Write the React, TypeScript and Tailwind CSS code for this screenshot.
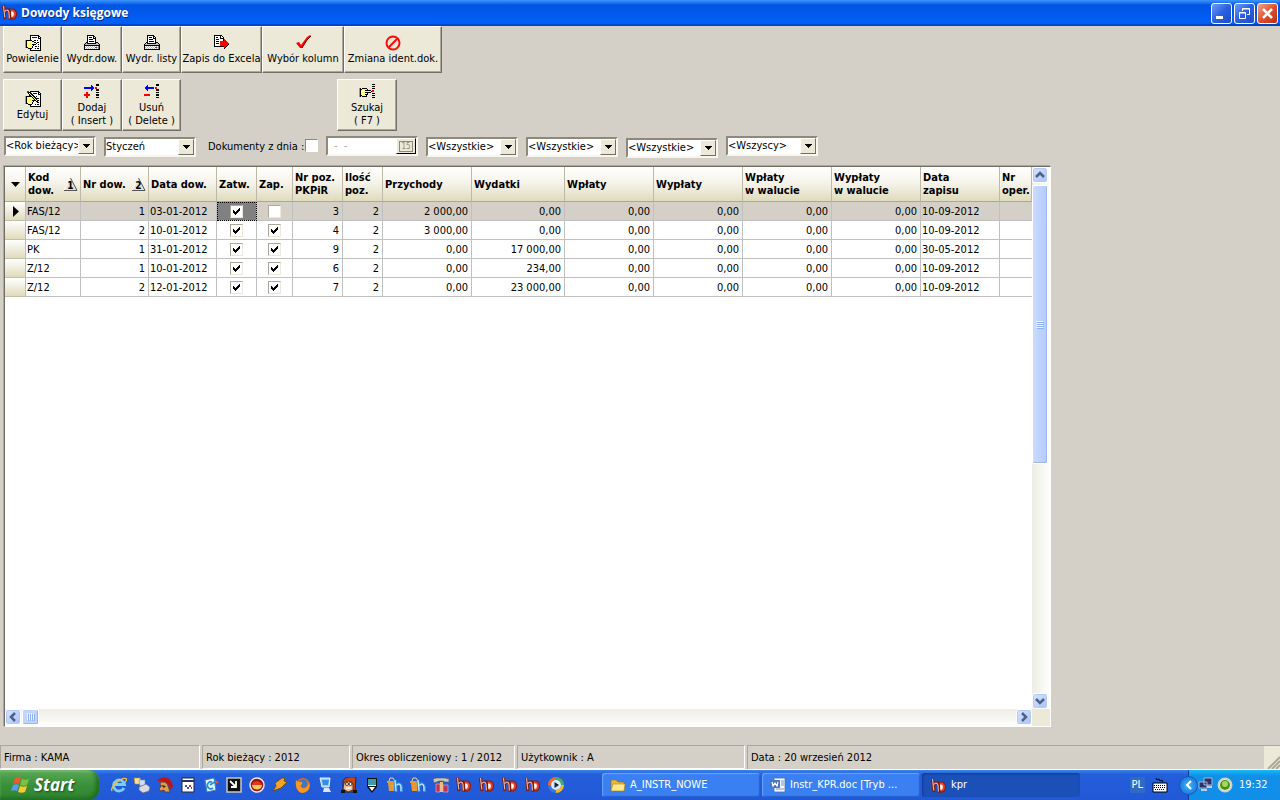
import type { ReactNode } from 'react';
import { clsx } from 'clsx';

const PALETTE: Record<string, string> = {
  K: '#000000',
  W: '#ffffff',
  Y: '#ffff7a',
  C: '#00d8e8',
  R: '#ff0000',
  B: '#0000ff',
  G: '#808080',
  L: '#c0c0c0',
};

const HAND_DOC = [
  '.....KKKKKKKKK..',
  '.....KWWWWWWWKK.',
  '.....KWBBBBBWKWK',
  '.....KWWWWWWWKKK',
  '.....KWWWWWWWWWK',
  'CKKKKKKWWKKWKWWK',
  'CKYYYYYKKWWWWWWK',
  'CKYYYYYYYKKWKKWK',
  'CKYYYYYYYYYKWWWK',
  'CKYYYYYKKKKWWKWK',
  'CKYYYYYYKWWWWWWK',
  'CKYYYYYKWWKKWKWK',
  'CKKYYYYKWWWWWWWK',
  '...KKKKWWWKWKKWK',
  '.....KWWWWWWWWWK',
  '.....KKKKKKKKKKK',
];

const HAND_EDIT = [
  '..RR.KKKKKKKKK..',
  '..RKKKWWWWWWWKK.',
  '...KYKKWBBBBWKWK',
  '....KYKKWWWWWKKK',
  '....KKYKKWWWWWWK',
  'CKKKKKKYKKWKWWWK',
  'CKYYYYYKYKKWWWWK',
  'CKYYYYYYKYKKKKWK',
  'CKYYYYYYYKYKWWWK',
  'CKYYYYYKKKKYKKWK',
  'CKYYYYYYKWWKKWWK',
  'CKYYYYYKWWWWKKWK',
  'CKKYYYYKWWWWWWWK',
  '...KKKKWWWKWKKWK',
  '.....KWWWWWWWWWK',
  '.....KKKKKKKKKKK',
];

const PRINTER = [
  '...KKKKKKK......',
  '...KWWWWWKK.....',
  '...KWKKKWKWK....',
  '...KWWWWWKKK....',
  '...KWKKKKWWK....',
  '...KWWWWWWWK....',
  '...KWKKKKKWK....',
  '..KKWWWWWWWKKK..',
  '.KLKKKKKKKKKLLK.',
  'KLLLLLLLLLLLLLLK',
  'KKKKKKKKKKKKKKKK',
  'KWLWLWLWLWLWLWGK',
  'KLWLWLWLWLWRRLGK',
  'KWLWLWLWLWLWLWGK',
  'KKKKKKKKKKKKKKKK',
];

const EXPORT = [
  'KKKKKKKK........',
  'KWWWWWKWK.......',
  'KWKKWWKWWK......',
  'KWWWWWKKKK......',
  'KWKKKWWWWKR.....',
  'KWWWWWWWWKRR....',
  'KWKKKWRRRRRRR...',
  'KWWWWWRRRRRRRR..',
  'KWKKKWRRRRRRRRR.',
  'KWWWWWRRRRRRRRK.',
  'KWWWWWRRRRRRRK..',
  'KKKKKKKKKKRRK...',
  '..........RK....',
  '..........K.....',
];

const INSERT = [
  '............KKK.',
  '.......B....KKK.',
  '.......BB.......',
  'BBBBBBBBBB.RR...',
  'BBBBBBBBBB.RR...',
  '.......BB...KKK.',
  '.......B....KKK.',
  '................',
  '..RR........KKK.',
  '..RR............',
  'RRRRRR......KKK.',
  'RRRRRR......KKK.',
  '..RR............',
  '..RR........KKK.',
];

const DELETE = [
  '............KKK.',
  '...B........KKK.',
  '..BB............',
  '.BBBBBBBBB.RR...',
  '.BBBBBBBBB.RR...',
  '..BB........KKK.',
  '...B........KKK.',
  '................',
  '............KKK.',
  '................',
  'RRRRRR......KKK.',
  'RRRRRR......KKK.',
  '................',
  '............KKK.',
];

const SEARCH = [
  '.............KKK',
  '................',
  '.............KKK',
  '................',
  'CK.KKKKK.....KKK',
  'CKKYYYYYK.......',
  'CKYYYYKKKKKK.RR.',
  'CKYYYYYYYYYYKRR.',
  'CKYYYYKKKKKK....',
  'CKYYYYYYK....KKK',
  'CKYYYYKKK.......',
  'CKKYYYYK.....KKK',
  'CK.KKKKK........',
  '.............KKK',
];

function PixelIcon({ rows }: { rows: string[] }) {
  return (
    <svg className="block size-4" viewBox="0 0 16 16" shapeRendering="crispEdges" aria-hidden="true">
      {rows.flatMap((row, y) =>
        [...row].map((c, x) => (c === '.' ? null : <rect key={`${x}-${y}`} x={x} y={y} width="1" height="1" fill={PALETTE[c]} />)),
      )}
    </svg>
  );
}

const CheckIcon = () => (
  <svg className="block size-4" viewBox="0 0 16 16" aria-hidden="true">
    <path d="M1 8 L4 7 L6 10 L12 2 L15 0 L16 1 L12 5 L7 13 L5 13 Z" fill="#f00" />
    <path d="M7 13 L12 5 L16 1" stroke="#700" fill="none" />
  </svg>
);

const BanIcon = () => (
  <svg className="block size-4" viewBox="0 0 16 16" fill="none" stroke="#ff0808" strokeWidth="2" aria-hidden="true">
    <circle cx="8" cy="8" r="6.5" />
    <path d="M3.500 12.500 L12.500 3.500" />
  </svg>
);

function AppLogo() {
  return (
    <svg className="block size-4 shrink-0" viewBox="0 0 16 16" fill="none" aria-hidden="true">
      <path d="M7 3.500h3.500c6 0 6 11 0 11H8z" fill="#8c1a10" />
      <path d="M8.500 4.500h2c4.500 0 4.500 9 0 9H9z" fill="#e2452c" />
      <path d="M8.500 6.500h1.500c2.500 0 2.500 5 0 5.500H9z" fill="#fff3ee" />
      <path d="M1.500 1l1.500 13M3 7c1-3 4-3 4.500 0l.5 7.500" stroke="#7a1a10" strokeWidth="3" />
      <path d="M1.500 1l1.300 11.500M3 6.500c1-2 3.500-2 4 1l.4 6" stroke="#e8b0a2" strokeWidth="1.200" />
    </svg>
  );
}

function ToolButton({ icon, label, className }: { icon: ReactNode; label: string; className: string }) {
  return (
    <button
      type="button"
      className={clsx(
        'flex flex-col items-center justify-center gap-px whitespace-pre border border-t-white border-l-white border-r-[#716f64] border-b-[#716f64] bg-[#ece9d8] pt-px text-center leading-[13px] shadow-[inset_-1px_-1px_#aca899]',
        className,
      )}
    >
      {icon}
      {label}
    </button>
  );
}

function Combo({ name, value, className }: { name: string; value: string; className?: string }) {
  return (
    <div className={clsx('flex h-5 w-[92px] border-2 border-t-[#8d8a7c] border-l-[#8d8a7c] border-r-[#f8f6ee] border-b-[#f8f6ee] bg-white', className)}>
      <select aria-label={name} className="min-w-0 flex-1 appearance-none bg-white outline-none">
        <option>{value}</option>
      </select>
      <span className="pointer-events-none flex w-4 items-center justify-center border border-t-white border-l-white border-r-[#716f64] border-b-[#716f64] bg-[#ece9d8]">
        <svg className="h-1 w-[7px]" viewBox="0 0 7 4" shapeRendering="crispEdges"><path d="M0 0h7L3.500 4z" /></svg>
      </span>
    </div>
  );
}

function Tick({ label, checked }: { label: string; checked?: boolean }) {
  return (
    <span className="inline-grid size-[13px] align-middle">
      <input
        type="checkbox"
        aria-label={label}
        defaultChecked={checked}
        className="peer col-start-1 row-start-1 size-[13px] appearance-none border border-t-[#aca899] border-l-[#aca899] border-r-[#ece9d8] border-b-[#ece9d8] bg-white"
      />
      <svg className="pointer-events-none col-start-1 row-start-1 hidden size-[13px] peer-checked:block" viewBox="0 0 13 13" shapeRendering="crispEdges">
        <path d="M3 5v3l2 2 5-5V2L5 7z" />
      </svg>
    </span>
  );
}

function SortMark({ order }: { order: number }) {
  return (
    <svg className="h-[15px] w-[15px] shrink-0" viewBox="0 0 15 15">
      <path d="M7.500 1 L1 13.500 H14" fill="#e6e3d6" stroke="#fff" />
      <path d="M7.500 1 L14 13.500 H1" fill="none" stroke="#555" />
      <text x="7.500" y="12" fontSize="10" fontWeight="700" textAnchor="middle">{order}</text>
    </svg>
  );
}

type Column = { title: string; width: string; order?: number };

const COLUMNS: Column[] = [
  { title: 'Kod\ndow.', width: 'w-[55px]', order: 1 },
  { title: 'Nr dow.', width: 'w-[68px]', order: 2 },
  { title: 'Data dow.', width: 'w-[68px]' },
  { title: 'Zatw.', width: 'w-[40px]' },
  { title: 'Zap.', width: 'w-[36px]' },
  { title: 'Nr poz.\nPKPiR', width: 'w-[50px]' },
  { title: 'Ilość\npoz.', width: 'w-[40px]' },
  { title: 'Przychody', width: 'w-[89px]' },
  { title: 'Wydatki', width: 'w-[93px]' },
  { title: 'Wpłaty', width: 'w-[89px]' },
  { title: 'Wypłaty', width: 'w-[89px]' },
  { title: 'Wpłaty\nw walucie', width: 'w-[89px]' },
  { title: 'Wypłaty\nw walucie', width: 'w-[89px]' },
  { title: 'Data\nzapisu', width: 'w-[79px]' },
  { title: 'Nr\noper.', width: 'w-auto' },
];

const ROWS = [
  { code: 'FAS/12', nr: '1', date: '03-01-2012', paid: false, pos: '3', income: '2 000,00', cost: '0,00', saved: '10-09-2012' },
  { code: 'FAS/12', nr: '2', date: '10-01-2012', paid: true, pos: '4', income: '3 000,00', cost: '0,00', saved: '10-09-2012' },
  { code: 'PK', nr: '1', date: '31-01-2012', paid: true, pos: '9', income: '0,00', cost: '17 000,00', saved: '30-05-2012' },
  { code: 'Z/12', nr: '1', date: '10-01-2012', paid: true, pos: '6', income: '0,00', cost: '234,00', saved: '10-09-2012' },
  { code: 'Z/12', nr: '2', date: '12-01-2012', paid: true, pos: '7', income: '0,00', cost: '23 000,00', saved: '10-09-2012' },
];

const HEAD = 'h-[35px] border-r border-b border-r-[#bdb9a6] border-b-[#aca899] bg-linear-to-b from-white via-[#f4f2e8] to-[#dfdbbc] p-0';
const CELL = 'h-[19px] overflow-hidden whitespace-nowrap border-r border-b border-[#c0c0c0] py-0';
const TEXT = clsx(CELL, 'pl-px');
const NUM = clsx(CELL, 'pr-[3px] text-right');
const MARK = clsx(CELL, 'px-0 text-center leading-none');

function DocumentTable() {
  return (
    <table className="w-full table-fixed border-separate border-spacing-0 leading-[13px]">
      <thead>
        <tr>
          <th className={clsx(HEAD, 'w-[21px]')} aria-label="Menu">
            <svg className="mx-auto h-[5px] w-[9px]" viewBox="0 0 9 5"><path d="M0 0h9L4.500 5z" /></svg>
          </th>
          {COLUMNS.map((col) => (
            <th key={col.title} className={clsx(HEAD, col.width)}>
              <div className="flex items-center justify-between overflow-hidden whitespace-pre pr-[2px] pl-[2px] text-left font-bold">
                {col.title}
                {col.order && <SortMark order={col.order} />}
              </div>
            </th>
          ))}
        </tr>
      </thead>
      <tbody>
        {ROWS.map((row, i) => (
          <tr key={`${row.code}-${row.nr}`} className={i === 0 ? 'bg-[#d4d0c8]' : 'bg-white'}>
            <td className="h-[19px] border-r border-b border-[#c0bda8] bg-linear-to-b from-white to-[#dfdbbc] p-0">
              {i === 0 && <svg className="ml-2 h-[11px] w-[6px]" viewBox="0 0 6 11"><path d="M0 0l6 5.500L0 11z" /></svg>}
            </td>
            <td className={TEXT}>{row.code}</td>
            <td className={NUM}>{row.nr}</td>
            <td className={TEXT}>{row.date}</td>
            <td className={clsx(MARK, i === 0 && 'bg-[#808080] outline outline-dotted -outline-offset-1 outline-black')}>
              <Tick label="Zatwierdzony" checked />
            </td>
            <td className={MARK}><Tick label="Zapisany" checked={row.paid} /></td>
            <td className={NUM}>{row.pos}</td>
            <td className={NUM}>2</td>
            <td className={NUM}>{row.income}</td>
            <td className={NUM}>{row.cost}</td>
            <td className={NUM}>0,00</td>
            <td className={NUM}>0,00</td>
            <td className={NUM}>0,00</td>
            <td className={NUM}>0,00</td>
            <td className={TEXT}>{row.saved}</td>
            <td className={clsx(CELL, 'border-r-0')} />
          </tr>
        ))}
      </tbody>
    </table>
  );
}

function ScrollButton({ label, path }: { label: string; path: string }) {
  return (
    <button type="button" aria-label={label} className="flex size-4 shrink-0 items-center justify-center rounded-[3px] border border-white bg-linear-to-br from-[#d8e4ff] to-[#a9c4f8] shadow-[inset_0_0_0_1px_#b4c8f6]">
      <svg className="size-[10px]" viewBox="0 0 10 10" fill="none" stroke="#4d6185" strokeWidth="2.500"><path d={path} /></svg>
    </button>
  );
}

const XP_BUTTON = 'flex size-[21px] items-center justify-center rounded-[3px] border border-white';

function TitleBar() {
  return (
    <header className="flex h-[26px] shrink-0 items-center bg-linear-to-b from-[#3d95ff] from-0% via-[#0054e3] via-20% to-[#0262fc] pr-[2px] pl-[2px] shadow-[inset_0_-2px_1px_#0144c6]">
      <AppLogo />
      <h1 className="ml-[3px] flex-1 font-['Open_Sans',sans-serif] text-[12px] font-bold text-white [text-shadow:1px_1px_#0a2d85]">Dowody księgowe</h1>
      <div className="flex gap-[2px]">
        <button type="button" aria-label="Minimalizuj" className={clsx(XP_BUTTON, 'bg-linear-to-br from-[#6f9bf5] via-[#2c5fe0] to-[#1c4ccc]')}>
          <svg className="size-[19px]" viewBox="0 0 19 19"><path d="M4 12h7v3H4z" fill="#fff" /></svg>
        </button>
        <button type="button" aria-label="Przywróć" className={clsx(XP_BUTTON, 'bg-linear-to-br from-[#6f9bf5] via-[#2c5fe0] to-[#1c4ccc]')}>
          <svg className="size-[19px]" viewBox="0 0 19 19" fill="none" stroke="#fff"><path d="M7.500 7V4.500h7v6H12M7 5h8M4.500 8.500h6v6h-6zM4 9h7" /></svg>
        </button>
        <button type="button" aria-label="Zamknij" className={clsx(XP_BUTTON, 'bg-linear-to-br from-[#f0a08a] via-[#e0502c] to-[#b8320c]')}>
          <svg className="size-[19px]" viewBox="0 0 19 19" stroke="#fff" strokeWidth="2.500"><path d="M5 5l9 9M14 5l-9 9" /></svg>
        </button>
      </div>
    </header>
  );
}

const LibraryIcon = () => (
  <>
    <path d="M0 4h8v2l-1 8H2L1 6H0z" fill="#e39a35" />
    <path d="M2 4l1-3h3l2 3" fill="none" stroke="#f4d08a" />
    <path d="M8 3l1 12M9 9c1-3 5-3 5.500 1v5" fill="none" stroke="#2c8fe0" strokeWidth="3" />
    <path d="M8 3l1 11M9.500 8.500c1-2 4-2 4.500 1.500v4" fill="none" stroke="#c3e8ff" strokeWidth="1.300" />
  </>
);

const LAUNCH: { name: string; art: ReactNode }[] = [
  { name: 'Internet Explorer', art: <>
    <path d="M13 11a5.500 5.500 0 1 1 .5-3.500H4" fill="none" stroke="#7accff" strokeWidth="2.800" />
    <path d="M1 14C-1 10 10 0 15 1.500c1 .8 0 3-1 4" fill="none" stroke="#f4c430" strokeWidth="1.300" />
  </> },
  { name: 'Skaner', art: <>
    <path d="M0 1h6l2 6H1z" fill="#ffe08a" stroke="#c88a20" strokeWidth=".6" />
    <path d="M5 3h6v6H6z" fill="#cfe0ff" stroke="#6f8fc0" strokeWidth=".6" />
    <path d="M5 10l7-3 4 3-1 4-6 2-4-3z" fill="#d8dbe2" stroke="#667" strokeWidth=".7" />
  </> },
  { name: 'Hełm', art: <>
    <path d="M0 4C3-1 13-1 15 6l1 3-2 4-3-6-5-3z" fill="#c01414" />
    <path d="M3 6c3-2 7-1 8 3l2 6H8l-1-2-4 1-1-3 2-1z" fill="#dda050" stroke="#65340a" strokeWidth=".7" />
    <path d="M4 8l5 1-2 2" fill="#482005" />
  </> },
  { name: 'Kalendarz', art: <>
    <path d="M2 1h12v14H2z" fill="#fff" stroke="#223" />
    <path d="M2 3h12v2H2z" fill="#25325c" />
    <path d="M5 8h2v2H5zM7 10h2v2H7z" fill="#3454d0" /><path d="M9 8h2v2H9zM11 10h1v2h-1z" fill="#e03030" />
  </> },
  { name: 'Notatki', art: <>
    <path d="M2 3l9-2 2 12-9 2z" fill="#e9f5ff" stroke="#3386bd" />
    <path d="M9 5a3.500 3.500 0 1 0 1 6M7 8l6-4" fill="none" stroke="#2c8fd4" strokeWidth="1.800" />
    <path d="M12 3l4 2-3 2z" fill="#e05a1c" />
  </> },
  { name: 'Konsola', art: <>
    <path d="M1 1h14v14H1z" fill="#111" stroke="#c8c8c8" strokeWidth="1.500" />
    <path d="M4 4l5 5M10 4v6H5" stroke="#fff" strokeWidth="1.800" fill="none" />
  </> },
  { name: 'Nero', art: <>
    <circle cx="8" cy="8" r="7" fill="#a31212" stroke="#f2e4e4" strokeWidth="1.500" />
    <path d="M3 8h10c0 6-10 6-10 0" fill="#f3c860" /><path d="M3 8c1-5 8-5 10 0" fill="#e03a1c" />
  </> },
  { name: 'Winamp', art: <path d="M10 1L3 6l1 3-3 5 8-3 6-6-3-1 1-3z" fill="#f0a428" stroke="#704810" strokeWidth=".9" /> },
  { name: 'Firefox', art: <>
    <circle cx="8" cy="8" r="7" fill="#e86818" />
    <circle cx="8" cy="6.500" r="4.300" fill="#3c78c8" />
    <path d="M1 3c1 2 4 2 6 2 1 3-2 2-1 5 3 3 7 1 8-5 2 7-2 11-7 11C2 15 0 9 1 3z" fill="#f79820" />
  </> },
  { name: 'Pulpit', art: <>
    <path d="M2 1h10l-1 9H4z" fill="#8ecbff" stroke="#e7f3ff" /><path d="M4 3h7l-1 5H5z" fill="#398be8" />
    <path d="M6 11h5l2 4H5z" fill="#d9e6f8" />
  </> },
  { name: 'Irfan', art: <>
    <path d="M2 4C4-1 14-1 15 1l-1 14H2z" fill="#c9440f" stroke="#111" strokeWidth=".7" />
    <path d="M3 6c4-3 9-2 9 2v5l-5 2-5-3z" fill="#f4b98a" stroke="#402010" strokeWidth=".8" />
    <circle cx="6" cy="7" r="1.500" fill="#fff" stroke="#000" strokeWidth=".7" /><circle cx="9.500" cy="7" r="1.500" fill="#fff" stroke="#000" strokeWidth=".7" />
    <path d="M5 11h5" stroke="#fff" strokeWidth="1.500" /><path d="M0 13h4v3H0zM12 13h4v3h-4z" fill="#111" />
  </> },
  { name: 'Pióro', art: <>
    <path d="M3 1h10v9l-5 6-5-6z" fill="#111" /><path d="M4 2h8v6H4z" fill="#3b99a8" /><path d="M5 10h6l-3 4z" fill="#fff" /><path d="M4 8.500h8" stroke="#d7eef2" />
  </> },
  { name: 'Biblioteka', art: <LibraryIcon /> },
  { name: 'Biblioteka 2', art: <LibraryIcon /> },
  { name: 'Narzędzia', art: <>
    <path d="M0 2l3-1h9l4 1v3h-4L10 4H6L1 6z" fill="#c5c8c0" stroke="#56584f" strokeWidth=".6" />
    <path d="M7 5h3v10H7z" fill="#e5c16c" /><path d="M3 7h4v8H3zM10 8h5v7h-5z" fill="#c03058" stroke="#f5b9c8" strokeWidth=".6" />
  </> },
];

function StartFlag() {
  return (
    <svg className="size-[18px]" viewBox="0 0 18 18" aria-hidden="true">
      <path d="M4 2c2-1 3-1 6 0L8 8C6 7 4 7 2 8z" fill="#f0592b" />
      <path d="M11 3c2 1 4 1 7 0l-2 6c-2 1-5 1-7 0z" fill="#7cc242" />
      <path d="M2 9c2-1 4-1 6 0l-2 6c-2-1-4-1-6 0z" fill="#5a9cf0" />
      <path d="M9 10c2 1 4 1 7 0l-2 6c-2 1-5 1-7 0z" fill="#fdc82e" />
    </svg>
  );
}

const TASK = 'flex h-6 w-[158px] items-center rounded-[3px] bg-[#3a80f3] pl-2 shadow-[inset_1px_1px_1px_#6aa5fb,inset_-1px_-1px_1px_#2560cc]';

function Taskbar() {
  return (
    <footer className="flex h-[30px] shrink-0 items-stretch bg-linear-to-b from-[#3a84ea] from-0% via-[#245edb] via-15% to-[#2158d6] text-white">
      <button type="button" className="flex w-[99px] items-center gap-[5px] rounded-r-[10px] bg-linear-to-b from-[#5ba957] via-[#3a9038] to-[#2f8430] pl-[11px] font-['Open_Sans',sans-serif] text-[17px] font-bold italic shadow-[inset_-3px_-2px_4px_#1f6a22,inset_0_2px_2px_#7cc078] [text-shadow:1px_1px_2px_#1b4d1c]">
        <StartFlag />
        Start
      </button>
      <nav aria-label="Szybkie uruchamianie" className="ml-3 flex items-center gap-[7px]">
        {LAUNCH.map((item) => (
          <button key={item.name} type="button" aria-label={item.name}>
            <svg className="block size-4" viewBox="0 0 16 16">{item.art}</svg>
          </button>
        ))}
        {[1, 2, 3, 4].map((n) => (
          <button key={n} type="button" aria-label={`kpr ${n}`}><AppLogo /></button>
        ))}
        <button type="button" aria-label="Media Player">
          <svg className="block size-4" viewBox="0 0 16 16" fill="none">
            <path d="M8 1.500A6.500 6.500 0 0 1 14.500 8" stroke="#4cae4c" strokeWidth="3" /><path d="M14.500 8A6.500 6.500 0 0 1 8 14.500" stroke="#f3b62a" strokeWidth="3" />
            <path d="M8 14.500A6.500 6.500 0 0 1 1.500 8" stroke="#3c78e0" strokeWidth="3" /><path d="M1.500 8A6.500 6.500 0 0 1 8 1.500" stroke="#f06a28" strokeWidth="3" />
            <circle cx="8" cy="8" r="5" fill="#d8ecff" /><path d="M6.500 5l4.500 3-4.500 3z" fill="#123" />
          </svg>
        </button>
      </nav>
      <div className="ml-[38px] flex min-w-0 flex-1 items-center gap-[2px]">
        <button type="button" className={clsx(TASK, 'gap-1')}>
          <svg className="size-4" viewBox="0 0 16 16"><path d="M1 3h5l2 2h6v9H1z" fill="#e8b93c" stroke="#8d6a12" strokeWidth=".6" /><path d="M3 7h12l-1 7H1z" fill="#ffe88c" stroke="#a78320" strokeWidth=".6" /></svg>
          A_INSTR_NOWE
        </button>
        <button type="button" className={clsx(TASK, 'gap-1')}>
          <svg className="size-4" viewBox="0 0 16 16">
            <path d="M4 1h11v14H4z" fill="#f2f6ff" stroke="#4f6fa8" strokeWidth=".8" /><path d="M11 4h3M11 6h3M11 8h3M6 12h8" stroke="#7c93bf" />
            <path d="M0 3h10v8H0z" fill="#4a73c0" /><path d="M2 5l1 4 2-3 2 3 1-4" fill="none" stroke="#fff" strokeWidth="1.200" />
          </svg>
          Instr_KPR.doc [Tryb ...
        </button>
        <button type="button" className="flex h-6 w-[158px] items-center gap-1 rounded-[3px] bg-[#1b50b8] pt-px pl-[9px] shadow-[inset_1px_1px_2px_#123a90]">
          <AppLogo />
          kpr
        </button>
      </div>
      <div className="flex items-center gap-[7px] pr-[20px]">
        <span className="bg-[#316ac5] px-[2px] leading-4">PL</span>
        <svg className="size-4" viewBox="0 0 16 16" aria-label="Klawiatura">
          <path d="M4 1l1 2 2-1 1 2 2-1 1 2" stroke="#000" fill="none" /><path d="M1 6h14v9H1z" fill="#fff" stroke="#000" />
          <path d="M2 8.500h12M2 10.500h12M3 12.500h10" stroke="#000" strokeDasharray="1 1" />
        </svg>
      </div>
      <div className="flex w-[92px] shrink-0 items-center border-l border-[#0b3f9c] bg-linear-to-b from-[#19b9f3] from-0% via-[#1290e8] via-20% to-[#118ee9]">
        <button type="button" aria-label="Pokaż ukryte ikony" className="-ml-[10px] flex size-[19px] shrink-0 items-center justify-center rounded-full border border-[#1c55b0] bg-radial from-[#42b4ff] to-[#1268d4]">
          <svg className="size-[10px]" viewBox="0 0 10 10" fill="none" stroke="#fff" strokeWidth="2"><path d="M7 1L3 5l4 4" /></svg>
        </button>
        <svg className="size-4 shrink-0" viewBox="0 0 16 16">
          <path d="M6 1h8v7H6zM1 5h8v6H1z" fill="#2c3264" stroke="#a9b6d8" /><path d="M9 10h5M3 13h6" stroke="#c5cbe6" strokeWidth="2" />
        </svg>
        <svg className="ml-[3px] size-4 shrink-0" viewBox="0 0 16 16"><circle cx="8" cy="8" r="6.500" fill="#fff" stroke="#c8d4c4" strokeWidth="2" /><circle cx="8" cy="8" r="5" fill="#4a8f1c" /><circle cx="8" cy="7" r="3" fill="#a5da58" /></svg>
        <time className="ml-[6px]">19:32</time>
      </div>
    </footer>
  );
}

const PANEL = 'flex items-center border border-t-[#aca899] border-l-[#aca899] border-r-white border-b-white pl-[3px]';

export default function App() {
  return (
    <div className="flex h-screen flex-col overflow-hidden bg-[#d4d0c8] font-['DejaVu_Sans_Condensed','Noto_Sans',sans-serif] text-[11px] text-black">
      <TitleBar />

      <main className="flex min-h-0 flex-1 flex-col">
        <div className="flex h-[47px] shrink-0 pl-[3px]">
          <ToolButton className="w-[59px]" icon={<PixelIcon rows={HAND_DOC} />} label="Powielenie" />
          <ToolButton className="w-[60px]" icon={<PixelIcon rows={PRINTER} />} label="Wydr.dow." />
          <ToolButton className="w-[59px]" icon={<PixelIcon rows={PRINTER} />} label="Wydr. listy" />
          <ToolButton className="w-[81px]" icon={<PixelIcon rows={EXPORT} />} label="Zapis do Excela" />
          <ToolButton className="w-[82px]" icon={<CheckIcon />} label="Wybór kolumn" />
          <ToolButton className="w-[98px]" icon={<BanIcon />} label="Zmiana ident.dok." />
        </div>

        <div className="mt-[6px] flex h-[52px] shrink-0 pl-[3px]">
          <ToolButton className="w-[59px]" icon={<PixelIcon rows={HAND_EDIT} />} label="Edytuj" />
          <ToolButton className="w-[60px]" icon={<PixelIcon rows={INSERT} />} label={'Dodaj\n( Insert )'} />
          <ToolButton className="w-[59px]" icon={<PixelIcon rows={DELETE} />} label={'Usuń\n( Delete )'} />
          <ToolButton className="ml-[156px] w-[60px]" icon={<PixelIcon rows={SEARCH} />} label={'Szukaj\n( F7 )'} />
        </div>

        <div className="mt-[5px] flex h-[22px] shrink-0 items-start gap-2 pl-1">
          <Combo name="Rok" value="<Rok bieżący>" />
          <Combo name="Miesiąc" value="Styczeń" className="mt-px" />
          <label htmlFor="by-day" className="ml-1 w-[89px] whitespace-nowrap leading-[22px]">Dokumenty z dnia :</label>
          <input id="by-day" type="checkbox" className="mt-[3px] size-[13px] appearance-none border border-t-[#8d8a7c] border-l-[#8d8a7c] border-r-white border-b-white bg-white" />
          <div className="flex h-5 w-[92px] border-2 border-t-[#8d8a7c] border-l-[#8d8a7c] border-r-[#f8f6ee] border-b-[#f8f6ee] bg-white">
            <input aria-label="Data dokumentu" defaultValue="-  -" disabled className="min-w-0 flex-1 bg-white pl-[6px] text-[#aca899]" />
            <button type="button" aria-label="Kalendarz" className="flex w-5 items-center justify-center border border-t-white border-l-white border-r-black border-b-black bg-[#ece9d8]">
              <span className="border border-[#8d8a7c] px-px text-[8px] leading-[9px] text-[#8d8a7c]">15</span>
            </button>
          </div>
          <Combo name="Filtr 1" value="<Wszystkie>" className="mt-px" />
          <Combo name="Filtr 2" value="<Wszystkie>" className="mt-px" />
          <Combo name="Filtr 3" value="<Wszystkie>" className="mt-[2px]" />
          <Combo name="Użytkownik" value="<Wszyscy>" />
        </div>

        <section className="mt-2 mr-[229px] mb-[18px] ml-1 flex min-h-0 flex-1 flex-col border border-t-[#716f64] border-l-[#716f64] border-r-white border-b-white bg-[#ece9d8] shadow-[-1px_-1px_#aca899]">
          <div className="flex min-h-0 flex-1">
            <div className="min-w-0 flex-1 overflow-hidden bg-white">
              <DocumentTable />
            </div>
            <div className="flex w-[18px] flex-col bg-linear-to-r from-[#eeede5] to-[#fefefb]">
              <ScrollButton label="W górę" path="M1 7l4-4 4 4" />
              <div className="min-h-0 flex-1 pt-[2px]">
                <div className="flex h-[55%] w-4 items-center justify-center rounded-[2px] border border-white bg-linear-to-r from-[#cbdaff] to-[#b5cbfb] shadow-[inset_-1px_-1px_#9db6ea]">
                  <svg className="h-2 w-2" viewBox="0 0 8 8"><path d="M0 .5h7M0 2.500h7M0 4.500h7M0 6.500h7" stroke="#eef4fe" /><path d="M1 1.500h7M1 3.500h7M1 5.500h7M1 7.500h7" stroke="#8cb0f8" /></svg>
                </div>
              </div>
              <ScrollButton label="W dół" path="M1 3l4 4 4-4" />
            </div>
          </div>
          <div className="mr-[18px] flex h-[17px] bg-linear-to-b from-[#eeede5] to-[#fefefb]">
            <ScrollButton label="W lewo" path="M7 1L3 5l4 4" />
            <div className="flex-1 pl-px">
              <div className="flex h-4 w-[17px] items-center justify-center rounded-[2px] border border-white bg-[#c2d3fd] shadow-[inset_-1px_-1px_#9db6ea]">
                <svg className="h-2 w-2" viewBox="0 0 8 8"><path d="M.5 0v7M2.500 0v7M4.500 0v7M6.500 0v7" stroke="#eef4fe" /><path d="M1.500 1v7M3.500 1v7M5.500 1v7M7.500 1v7" stroke="#8cb0f8" /></svg>
              </div>
            </div>
            <ScrollButton label="W prawo" path="M3 1l4 4-4 4" />
          </div>
        </section>

        <div className="flex h-[25px] shrink-0 gap-[2px] border-b border-white">
          <div className={clsx(PANEL, 'w-[200px] pt-[2px]')}>Firma : KAMA</div>
          <div className={clsx(PANEL, 'w-[148px] pt-[2px]')}>Rok bieżący : 2012</div>
          <div className={clsx(PANEL, 'w-[163px] pt-[2px]')}>Okres obliczeniowy : 1 / 2012</div>
          <div className={clsx(PANEL, 'w-[228px] pt-[2px]')}>Użytkownik : A</div>
          <div className={clsx(PANEL, 'flex-1 justify-between border-r-0 border-b-0')}>
            <span className="pt-px">Data : 20 wrzesień 2012</span>
            <span className="flex h-full w-4 items-end bg-[#ece9d8]">
              <svg className="size-4" viewBox="0 0 16 16" stroke="#aca899" strokeWidth="2"><path d="M4 16L16 4M8 16l8-8M12 16l4-4" /></svg>
            </span>
          </div>
        </div>
      </main>

      <Taskbar />
    </div>
  );
}
